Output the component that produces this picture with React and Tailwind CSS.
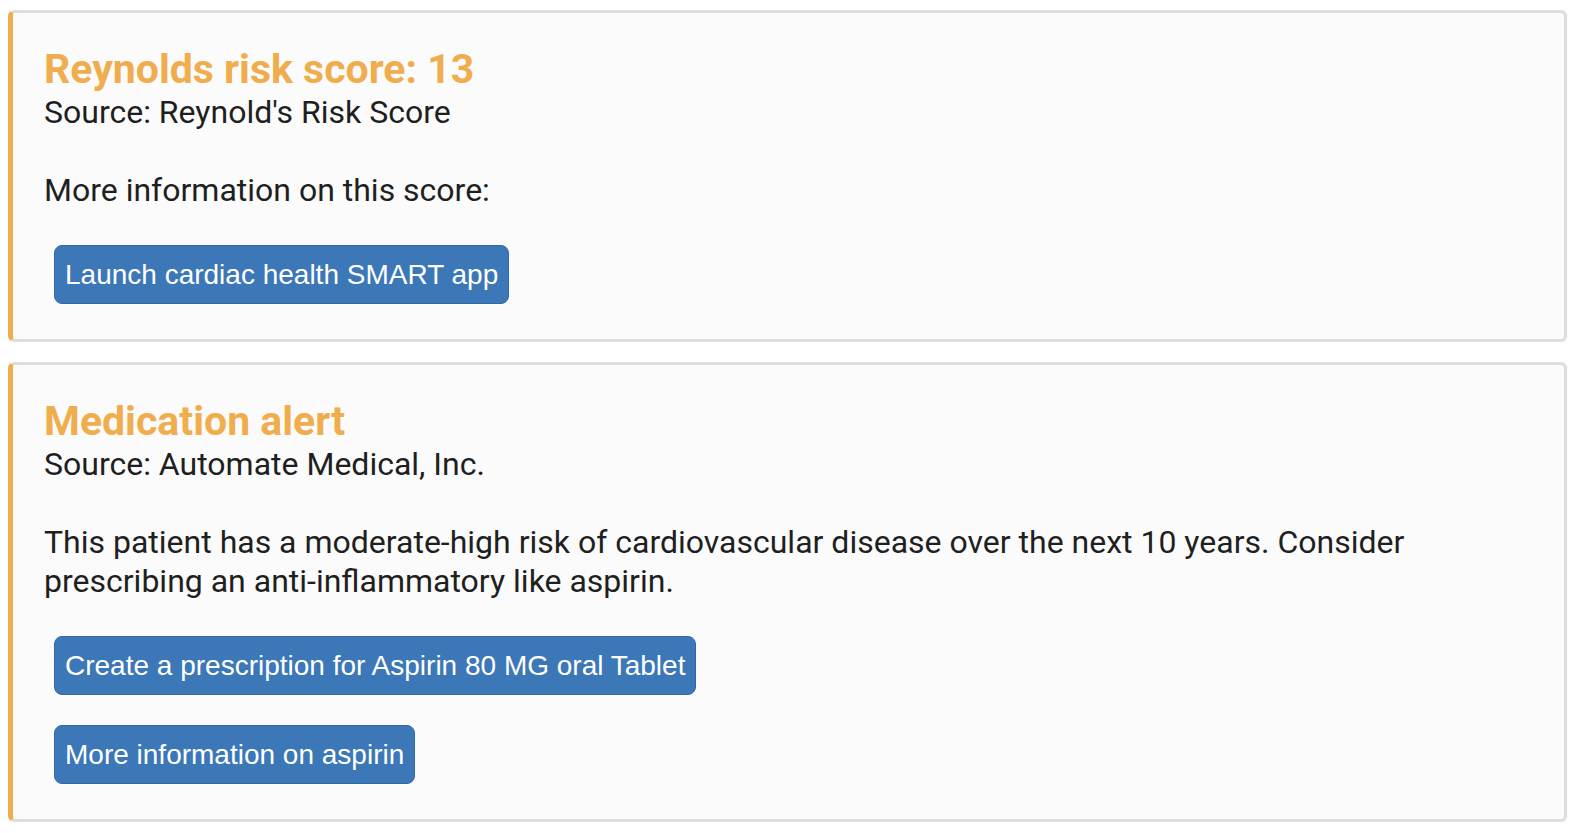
import React from "react";

const cards = [
  {
    title: "Reynolds risk score: 13",
    source: "Reynold's Risk Score",
    body: "More information on this score:",
    links: ["Launch cardiac health SMART app"],
  },
  {
    title: "Medication alert",
    source: "Automate Medical, Inc.",
    body: "This patient has a moderate-high risk of cardiovascular disease over the next 10 years. Consider prescribing an anti-inflammatory like aspirin.",
    links: [
      "Create a prescription for Aspirin 80 MG oral Tablet",
      "More information on aspirin",
    ],
  },
];

const Card = ({ title, source, body, links }) => {
  return (
    <div className="bg-[#fbfbfb] border-[3px] border-[#dddddd] border-l-[5px] border-l-[#f0ad4e] rounded-[6px] pt-[32px] pb-[35px] pl-[31px] pr-[32px]">
      <h2 className="text-[41px] leading-[48px] font-bold text-[#f0ad4e]">{title}</h2>
      <p className="text-[32px] leading-[39px] text-[#1f1f1f]">Source: {source}</p>
      <p className="text-[32px] leading-[39px] text-[#1f1f1f] mt-[39px]">{body}</p>
      <div className="mt-[35px] ml-[10px] flex flex-col items-start gap-[30px]">
        {links.map((label) => (
          <button
            key={label}
            className="h-[59px] px-[10px] flex items-center bg-[#3c77b7] border border-[#2e6aa6] rounded-[8px] text-white text-[28px] font-['Liberation_Sans',Arial,sans-serif]"
          >
            {label}
          </button>
        ))}
      </div>
    </div>
  );
};

export default function App() {
  return (
    <div className="bg-white min-h-[833px] pt-[10px] pl-[8px] pr-[11px] font-['Roboto','Noto_Sans',sans-serif]">
      <div className="flex flex-col gap-[20px]">
        {cards.map((c) => (
          <Card key={c.title} {...c} />
        ))}
      </div>
    </div>
  );
}
